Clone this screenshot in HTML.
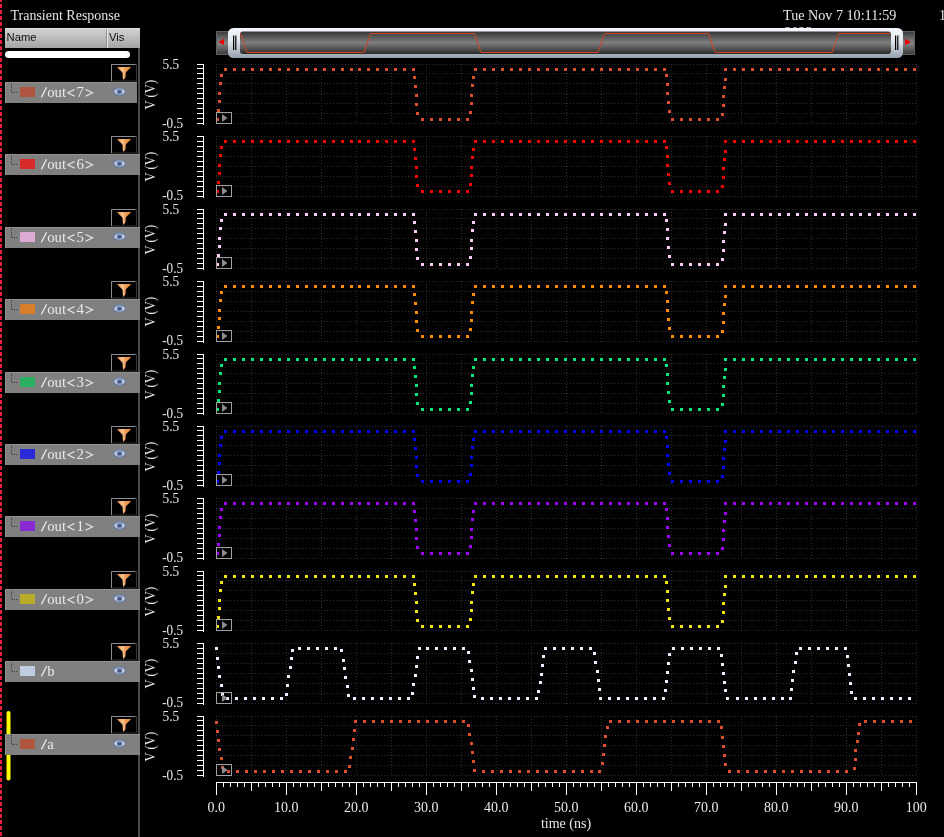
<!DOCTYPE html><html><head><meta charset="utf-8"><style>html,body{margin:0;padding:0;background:#000;width:944px;height:837px;overflow:hidden}svg{display:block;will-change:transform}</style></head><body>
<svg width="944" height="837" viewBox="0 0 944 837">
<defs>
<linearGradient id="hdr" x1="0" y1="0" x2="0" y2="1"><stop offset="0" stop-color="#d4d4d4"/><stop offset="1" stop-color="#a4a4a4"/></linearGradient>
<linearGradient id="pill" x1="0" y1="0" x2="0" y2="1"><stop offset="0" stop-color="#f4f8fc"/><stop offset="0.45" stop-color="#dfe5ec"/><stop offset="1" stop-color="#95a1ad"/></linearGradient>
<linearGradient id="dark" x1="0" y1="0" x2="0" y2="1"><stop offset="0" stop-color="#363636"/><stop offset="0.5" stop-color="#7e7e7e"/><stop offset="1" stop-color="#2a2a2a"/></linearGradient>
<linearGradient id="btn" x1="0" y1="0" x2="0" y2="1"><stop offset="0" stop-color="#3a3a3a"/><stop offset="0.5" stop-color="#858585"/><stop offset="1" stop-color="#383838"/></linearGradient>
<linearGradient id="fun" x1="0" y1="0" x2="1" y2="0"><stop offset="0" stop-color="#e8883a"/><stop offset="0.42" stop-color="#f8c890"/><stop offset="0.55" stop-color="#eea060"/><stop offset="1" stop-color="#f08420"/></linearGradient>
</defs>
<line x1="1" y1="0" x2="1" y2="837" stroke="#ec1c3c" stroke-width="2" stroke-dasharray="4 2" stroke-dashoffset="2"/>
<text x="10.5" y="20" font-family="Liberation Serif" font-size="14" fill="#e4e4e4" textLength="109.5" lengthAdjust="spacingAndGlyphs">Transient Response</text>
<rect x="5" y="28" width="135" height="20" fill="url(#hdr)"/>
<rect x="5" y="28" width="135" height="1" fill="#e0e0e0"/>
<rect x="106" y="29" width="1" height="19" fill="#909090"/><rect x="107" y="29" width="1" height="19" fill="#e8e8e8"/>
<text x="6.5" y="40.8" font-family="Liberation Sans" font-size="11.3" fill="#111">Name</text>
<text x="109" y="40.8" font-family="Liberation Sans" font-size="11.3" fill="#111">Vis</text>
<rect x="5" y="51" width="125" height="7" rx="3.5" fill="#ffffff"/>
<rect x="138" y="48" width="2" height="789" fill="#4a4a4a"/>
<rect x="6.5" y="711" width="4" height="69.5" rx="2" fill="#ffff00"/>
<rect x="111.5" y="64.5" width="25" height="16.5" fill="#000" stroke="#343434" stroke-width="1"/>
<path d="M111.5 81 V64.5 H135.5" fill="none" stroke="#8c8c8c" stroke-width="1"/>
<path d="M117 67 L131.2 67 C128.5 69.8 126.3 71.4 125.7 72.8 L125.5 77.2 L123.4 79.9 L122.8 77.5 L122.6 72.8 C121.6 71.4 119.5 69.8 117 67 Z" fill="url(#fun)"/>
<rect x="5" y="82" width="132" height="21" fill="#808080"/>
<rect x="5" y="82" width="132" height="1" fill="#929292"/>
<rect x="5" y="82" width="1" height="21" fill="#929292"/>
<rect x="11" y="83" width="1" height="1" fill="#3c3c3c"/>
<rect x="11" y="85" width="1" height="1" fill="#3c3c3c"/>
<rect x="11" y="87" width="1" height="1" fill="#3c3c3c"/>
<rect x="11" y="89" width="1" height="1" fill="#3c3c3c"/>
<rect x="11" y="91" width="1" height="1" fill="#3c3c3c"/>
<rect x="12" y="92" width="1" height="1" fill="#3c3c3c"/>
<rect x="14" y="92" width="1" height="1" fill="#3c3c3c"/>
<rect x="16" y="92" width="1" height="1" fill="#3c3c3c"/>
<rect x="20" y="87" width="15" height="10" fill="#b0553f"/>
<path d="M41.4 97.4 L46.6 87.3" stroke="#e6ece6" stroke-width="1.25" fill="none"/>
<text x="47.3 54.5 62" y="97" font-family="Liberation Serif" font-size="14.8" fill="#e6ece6">out</text>
<text x="76.6" y="97" font-family="Liberation Serif" font-size="14.8" fill="#e6ece6">7</text>
<path d="M74.6 89.4 L67.8 92.8 L74.6 96.2 M85.6 89.4 L92.6 92.8 L85.6 96.2" stroke="#e6ece6" stroke-width="1.1" fill="none"/>
<ellipse cx="119.5" cy="91.5" rx="6.5" ry="4.3" fill="#6a7ea8"/>
<ellipse cx="119.5" cy="91.5" rx="5" ry="3" fill="#d9dee6"/>
<ellipse cx="119.5" cy="91.5" rx="3" ry="2.9" fill="#7d8fb4"/>
<ellipse cx="119.5" cy="91.8" rx="2" ry="1.4" fill="#3f5585"/>
<rect x="111.5" y="136.5" width="25" height="16.5" fill="#000" stroke="#343434" stroke-width="1"/>
<path d="M111.5 153 V136.5 H135.5" fill="none" stroke="#8c8c8c" stroke-width="1"/>
<path d="M117 139 L131.2 139 C128.5 141.8 126.3 143.4 125.7 144.8 L125.5 149.2 L123.4 151.9 L122.8 149.5 L122.6 144.8 C121.6 143.4 119.5 141.8 117 139 Z" fill="url(#fun)"/>
<rect x="5" y="154" width="135" height="21" fill="#808080"/>
<rect x="5" y="154" width="135" height="1" fill="#929292"/>
<rect x="5" y="154" width="1" height="21" fill="#929292"/>
<rect x="11" y="155" width="1" height="1" fill="#3c3c3c"/>
<rect x="11" y="157" width="1" height="1" fill="#3c3c3c"/>
<rect x="11" y="159" width="1" height="1" fill="#3c3c3c"/>
<rect x="11" y="161" width="1" height="1" fill="#3c3c3c"/>
<rect x="11" y="163" width="1" height="1" fill="#3c3c3c"/>
<rect x="12" y="164" width="1" height="1" fill="#3c3c3c"/>
<rect x="14" y="164" width="1" height="1" fill="#3c3c3c"/>
<rect x="16" y="164" width="1" height="1" fill="#3c3c3c"/>
<rect x="20" y="159" width="15" height="10" fill="#d82a2a"/>
<path d="M41.4 169.4 L46.6 159.3" stroke="#e6ece6" stroke-width="1.25" fill="none"/>
<text x="47.3 54.5 62" y="169" font-family="Liberation Serif" font-size="14.8" fill="#e6ece6">out</text>
<text x="76.6" y="169" font-family="Liberation Serif" font-size="14.8" fill="#e6ece6">6</text>
<path d="M74.6 161.4 L67.8 164.8 L74.6 168.2 M85.6 161.4 L92.6 164.8 L85.6 168.2" stroke="#e6ece6" stroke-width="1.1" fill="none"/>
<ellipse cx="119.5" cy="163.5" rx="6.5" ry="4.3" fill="#6a7ea8"/>
<ellipse cx="119.5" cy="163.5" rx="5" ry="3" fill="#d9dee6"/>
<ellipse cx="119.5" cy="163.5" rx="3" ry="2.9" fill="#7d8fb4"/>
<ellipse cx="119.5" cy="163.8" rx="2" ry="1.4" fill="#3f5585"/>
<rect x="111.5" y="209.5" width="25" height="16.5" fill="#000" stroke="#343434" stroke-width="1"/>
<path d="M111.5 226 V209.5 H135.5" fill="none" stroke="#8c8c8c" stroke-width="1"/>
<path d="M117 212 L131.2 212 C128.5 214.8 126.3 216.4 125.7 217.8 L125.5 222.2 L123.4 224.9 L122.8 222.5 L122.6 217.8 C121.6 216.4 119.5 214.8 117 212 Z" fill="url(#fun)"/>
<rect x="5" y="227" width="135" height="21" fill="#808080"/>
<rect x="5" y="227" width="135" height="1" fill="#929292"/>
<rect x="5" y="227" width="1" height="21" fill="#929292"/>
<rect x="11" y="228" width="1" height="1" fill="#3c3c3c"/>
<rect x="11" y="230" width="1" height="1" fill="#3c3c3c"/>
<rect x="11" y="232" width="1" height="1" fill="#3c3c3c"/>
<rect x="11" y="234" width="1" height="1" fill="#3c3c3c"/>
<rect x="11" y="236" width="1" height="1" fill="#3c3c3c"/>
<rect x="12" y="237" width="1" height="1" fill="#3c3c3c"/>
<rect x="14" y="237" width="1" height="1" fill="#3c3c3c"/>
<rect x="16" y="237" width="1" height="1" fill="#3c3c3c"/>
<rect x="20" y="232" width="15" height="10" fill="#dcaad2"/>
<path d="M41.4 242.4 L46.6 232.3" stroke="#e6ece6" stroke-width="1.25" fill="none"/>
<text x="47.3 54.5 62" y="242" font-family="Liberation Serif" font-size="14.8" fill="#e6ece6">out</text>
<text x="76.6" y="242" font-family="Liberation Serif" font-size="14.8" fill="#e6ece6">5</text>
<path d="M74.6 234.4 L67.8 237.8 L74.6 241.2 M85.6 234.4 L92.6 237.8 L85.6 241.2" stroke="#e6ece6" stroke-width="1.1" fill="none"/>
<ellipse cx="119.5" cy="236.5" rx="6.5" ry="4.3" fill="#6a7ea8"/>
<ellipse cx="119.5" cy="236.5" rx="5" ry="3" fill="#d9dee6"/>
<ellipse cx="119.5" cy="236.5" rx="3" ry="2.9" fill="#7d8fb4"/>
<ellipse cx="119.5" cy="236.8" rx="2" ry="1.4" fill="#3f5585"/>
<rect x="111.5" y="281.5" width="25" height="16.5" fill="#000" stroke="#343434" stroke-width="1"/>
<path d="M111.5 298 V281.5 H135.5" fill="none" stroke="#8c8c8c" stroke-width="1"/>
<path d="M117 284 L131.2 284 C128.5 286.8 126.3 288.4 125.7 289.8 L125.5 294.2 L123.4 296.9 L122.8 294.5 L122.6 289.8 C121.6 288.4 119.5 286.8 117 284 Z" fill="url(#fun)"/>
<rect x="5" y="299" width="135" height="21" fill="#808080"/>
<rect x="5" y="299" width="135" height="1" fill="#929292"/>
<rect x="5" y="299" width="1" height="21" fill="#929292"/>
<rect x="11" y="300" width="1" height="1" fill="#3c3c3c"/>
<rect x="11" y="302" width="1" height="1" fill="#3c3c3c"/>
<rect x="11" y="304" width="1" height="1" fill="#3c3c3c"/>
<rect x="11" y="306" width="1" height="1" fill="#3c3c3c"/>
<rect x="11" y="308" width="1" height="1" fill="#3c3c3c"/>
<rect x="12" y="309" width="1" height="1" fill="#3c3c3c"/>
<rect x="14" y="309" width="1" height="1" fill="#3c3c3c"/>
<rect x="16" y="309" width="1" height="1" fill="#3c3c3c"/>
<rect x="20" y="304" width="15" height="10" fill="#d87e2a"/>
<path d="M41.4 314.4 L46.6 304.3" stroke="#e6ece6" stroke-width="1.25" fill="none"/>
<text x="47.3 54.5 62" y="314" font-family="Liberation Serif" font-size="14.8" fill="#e6ece6">out</text>
<text x="76.6" y="314" font-family="Liberation Serif" font-size="14.8" fill="#e6ece6">4</text>
<path d="M74.6 306.4 L67.8 309.8 L74.6 313.2 M85.6 306.4 L92.6 309.8 L85.6 313.2" stroke="#e6ece6" stroke-width="1.1" fill="none"/>
<ellipse cx="119.5" cy="308.5" rx="6.5" ry="4.3" fill="#6a7ea8"/>
<ellipse cx="119.5" cy="308.5" rx="5" ry="3" fill="#d9dee6"/>
<ellipse cx="119.5" cy="308.5" rx="3" ry="2.9" fill="#7d8fb4"/>
<ellipse cx="119.5" cy="308.8" rx="2" ry="1.4" fill="#3f5585"/>
<rect x="111.5" y="354.5" width="25" height="16.5" fill="#000" stroke="#343434" stroke-width="1"/>
<path d="M111.5 371 V354.5 H135.5" fill="none" stroke="#8c8c8c" stroke-width="1"/>
<path d="M117 357 L131.2 357 C128.5 359.8 126.3 361.4 125.7 362.8 L125.5 367.2 L123.4 369.9 L122.8 367.5 L122.6 362.8 C121.6 361.4 119.5 359.8 117 357 Z" fill="url(#fun)"/>
<rect x="5" y="372" width="135" height="21" fill="#808080"/>
<rect x="5" y="372" width="135" height="1" fill="#929292"/>
<rect x="5" y="372" width="1" height="21" fill="#929292"/>
<rect x="11" y="373" width="1" height="1" fill="#3c3c3c"/>
<rect x="11" y="375" width="1" height="1" fill="#3c3c3c"/>
<rect x="11" y="377" width="1" height="1" fill="#3c3c3c"/>
<rect x="11" y="379" width="1" height="1" fill="#3c3c3c"/>
<rect x="11" y="381" width="1" height="1" fill="#3c3c3c"/>
<rect x="12" y="382" width="1" height="1" fill="#3c3c3c"/>
<rect x="14" y="382" width="1" height="1" fill="#3c3c3c"/>
<rect x="16" y="382" width="1" height="1" fill="#3c3c3c"/>
<rect x="20" y="377" width="15" height="10" fill="#2aae60"/>
<path d="M41.4 387.4 L46.6 377.3" stroke="#e6ece6" stroke-width="1.25" fill="none"/>
<text x="47.3 54.5 62" y="387" font-family="Liberation Serif" font-size="14.8" fill="#e6ece6">out</text>
<text x="76.6" y="387" font-family="Liberation Serif" font-size="14.8" fill="#e6ece6">3</text>
<path d="M74.6 379.4 L67.8 382.8 L74.6 386.2 M85.6 379.4 L92.6 382.8 L85.6 386.2" stroke="#e6ece6" stroke-width="1.1" fill="none"/>
<ellipse cx="119.5" cy="381.5" rx="6.5" ry="4.3" fill="#6a7ea8"/>
<ellipse cx="119.5" cy="381.5" rx="5" ry="3" fill="#d9dee6"/>
<ellipse cx="119.5" cy="381.5" rx="3" ry="2.9" fill="#7d8fb4"/>
<ellipse cx="119.5" cy="381.8" rx="2" ry="1.4" fill="#3f5585"/>
<rect x="111.5" y="426.5" width="25" height="16.5" fill="#000" stroke="#343434" stroke-width="1"/>
<path d="M111.5 443 V426.5 H135.5" fill="none" stroke="#8c8c8c" stroke-width="1"/>
<path d="M117 429 L131.2 429 C128.5 431.8 126.3 433.4 125.7 434.8 L125.5 439.2 L123.4 441.9 L122.8 439.5 L122.6 434.8 C121.6 433.4 119.5 431.8 117 429 Z" fill="url(#fun)"/>
<rect x="5" y="444" width="135" height="21" fill="#808080"/>
<rect x="5" y="444" width="135" height="1" fill="#929292"/>
<rect x="5" y="444" width="1" height="21" fill="#929292"/>
<rect x="11" y="445" width="1" height="1" fill="#3c3c3c"/>
<rect x="11" y="447" width="1" height="1" fill="#3c3c3c"/>
<rect x="11" y="449" width="1" height="1" fill="#3c3c3c"/>
<rect x="11" y="451" width="1" height="1" fill="#3c3c3c"/>
<rect x="11" y="453" width="1" height="1" fill="#3c3c3c"/>
<rect x="12" y="454" width="1" height="1" fill="#3c3c3c"/>
<rect x="14" y="454" width="1" height="1" fill="#3c3c3c"/>
<rect x="16" y="454" width="1" height="1" fill="#3c3c3c"/>
<rect x="20" y="449" width="15" height="10" fill="#2a2ad8"/>
<path d="M41.4 459.4 L46.6 449.3" stroke="#e6ece6" stroke-width="1.25" fill="none"/>
<text x="47.3 54.5 62" y="459" font-family="Liberation Serif" font-size="14.8" fill="#e6ece6">out</text>
<text x="76.6" y="459" font-family="Liberation Serif" font-size="14.8" fill="#e6ece6">2</text>
<path d="M74.6 451.4 L67.8 454.8 L74.6 458.2 M85.6 451.4 L92.6 454.8 L85.6 458.2" stroke="#e6ece6" stroke-width="1.1" fill="none"/>
<ellipse cx="119.5" cy="453.5" rx="6.5" ry="4.3" fill="#6a7ea8"/>
<ellipse cx="119.5" cy="453.5" rx="5" ry="3" fill="#d9dee6"/>
<ellipse cx="119.5" cy="453.5" rx="3" ry="2.9" fill="#7d8fb4"/>
<ellipse cx="119.5" cy="453.8" rx="2" ry="1.4" fill="#3f5585"/>
<rect x="111.5" y="498.5" width="25" height="16.5" fill="#000" stroke="#343434" stroke-width="1"/>
<path d="M111.5 515 V498.5 H135.5" fill="none" stroke="#8c8c8c" stroke-width="1"/>
<path d="M117 501 L131.2 501 C128.5 503.8 126.3 505.4 125.7 506.8 L125.5 511.2 L123.4 513.9 L122.8 511.5 L122.6 506.8 C121.6 505.4 119.5 503.8 117 501 Z" fill="url(#fun)"/>
<rect x="5" y="516" width="135" height="21" fill="#808080"/>
<rect x="5" y="516" width="135" height="1" fill="#929292"/>
<rect x="5" y="516" width="1" height="21" fill="#929292"/>
<rect x="11" y="517" width="1" height="1" fill="#3c3c3c"/>
<rect x="11" y="519" width="1" height="1" fill="#3c3c3c"/>
<rect x="11" y="521" width="1" height="1" fill="#3c3c3c"/>
<rect x="11" y="523" width="1" height="1" fill="#3c3c3c"/>
<rect x="11" y="525" width="1" height="1" fill="#3c3c3c"/>
<rect x="12" y="526" width="1" height="1" fill="#3c3c3c"/>
<rect x="14" y="526" width="1" height="1" fill="#3c3c3c"/>
<rect x="16" y="526" width="1" height="1" fill="#3c3c3c"/>
<rect x="20" y="521" width="15" height="10" fill="#8a2ad2"/>
<path d="M41.4 531.4 L46.6 521.3" stroke="#e6ece6" stroke-width="1.25" fill="none"/>
<text x="47.3 54.5 62" y="531" font-family="Liberation Serif" font-size="14.8" fill="#e6ece6">out</text>
<text x="76.6" y="531" font-family="Liberation Serif" font-size="14.8" fill="#e6ece6">1</text>
<path d="M74.6 523.4 L67.8 526.8 L74.6 530.2 M85.6 523.4 L92.6 526.8 L85.6 530.2" stroke="#e6ece6" stroke-width="1.1" fill="none"/>
<ellipse cx="119.5" cy="525.5" rx="6.5" ry="4.3" fill="#6a7ea8"/>
<ellipse cx="119.5" cy="525.5" rx="5" ry="3" fill="#d9dee6"/>
<ellipse cx="119.5" cy="525.5" rx="3" ry="2.9" fill="#7d8fb4"/>
<ellipse cx="119.5" cy="525.8" rx="2" ry="1.4" fill="#3f5585"/>
<rect x="111.5" y="571.5" width="25" height="16.5" fill="#000" stroke="#343434" stroke-width="1"/>
<path d="M111.5 588 V571.5 H135.5" fill="none" stroke="#8c8c8c" stroke-width="1"/>
<path d="M117 574 L131.2 574 C128.5 576.8 126.3 578.4 125.7 579.8 L125.5 584.2 L123.4 586.9 L122.8 584.5 L122.6 579.8 C121.6 578.4 119.5 576.8 117 574 Z" fill="url(#fun)"/>
<rect x="5" y="589" width="135" height="21" fill="#808080"/>
<rect x="5" y="589" width="135" height="1" fill="#929292"/>
<rect x="5" y="589" width="1" height="21" fill="#929292"/>
<rect x="11" y="590" width="1" height="1" fill="#3c3c3c"/>
<rect x="11" y="592" width="1" height="1" fill="#3c3c3c"/>
<rect x="11" y="594" width="1" height="1" fill="#3c3c3c"/>
<rect x="11" y="596" width="1" height="1" fill="#3c3c3c"/>
<rect x="11" y="598" width="1" height="1" fill="#3c3c3c"/>
<rect x="12" y="599" width="1" height="1" fill="#3c3c3c"/>
<rect x="14" y="599" width="1" height="1" fill="#3c3c3c"/>
<rect x="16" y="599" width="1" height="1" fill="#3c3c3c"/>
<rect x="20" y="594" width="15" height="10" fill="#b8ac2a"/>
<path d="M41.4 604.4 L46.6 594.3" stroke="#e6ece6" stroke-width="1.25" fill="none"/>
<text x="47.3 54.5 62" y="604" font-family="Liberation Serif" font-size="14.8" fill="#e6ece6">out</text>
<text x="76.6" y="604" font-family="Liberation Serif" font-size="14.8" fill="#e6ece6">0</text>
<path d="M74.6 596.4 L67.8 599.8 L74.6 603.2 M85.6 596.4 L92.6 599.8 L85.6 603.2" stroke="#e6ece6" stroke-width="1.1" fill="none"/>
<ellipse cx="119.5" cy="598.5" rx="6.5" ry="4.3" fill="#6a7ea8"/>
<ellipse cx="119.5" cy="598.5" rx="5" ry="3" fill="#d9dee6"/>
<ellipse cx="119.5" cy="598.5" rx="3" ry="2.9" fill="#7d8fb4"/>
<ellipse cx="119.5" cy="598.8" rx="2" ry="1.4" fill="#3f5585"/>
<rect x="111.5" y="643.5" width="25" height="16.5" fill="#000" stroke="#343434" stroke-width="1"/>
<path d="M111.5 660 V643.5 H135.5" fill="none" stroke="#8c8c8c" stroke-width="1"/>
<path d="M117 646 L131.2 646 C128.5 648.8 126.3 650.4 125.7 651.8 L125.5 656.2 L123.4 658.9 L122.8 656.5 L122.6 651.8 C121.6 650.4 119.5 648.8 117 646 Z" fill="url(#fun)"/>
<rect x="5" y="661" width="135" height="21" fill="#808080"/>
<rect x="5" y="661" width="135" height="1" fill="#929292"/>
<rect x="5" y="661" width="1" height="21" fill="#929292"/>
<rect x="11" y="662" width="1" height="1" fill="#3c3c3c"/>
<rect x="11" y="664" width="1" height="1" fill="#3c3c3c"/>
<rect x="11" y="666" width="1" height="1" fill="#3c3c3c"/>
<rect x="11" y="668" width="1" height="1" fill="#3c3c3c"/>
<rect x="11" y="670" width="1" height="1" fill="#3c3c3c"/>
<rect x="12" y="671" width="1" height="1" fill="#3c3c3c"/>
<rect x="14" y="671" width="1" height="1" fill="#3c3c3c"/>
<rect x="16" y="671" width="1" height="1" fill="#3c3c3c"/>
<rect x="20" y="666" width="15" height="10" fill="#c0cce0"/>
<path d="M41.4 676.4 L46.6 666.3" stroke="#e6ece6" stroke-width="1.25" fill="none"/>
<text x="47.3" y="676" font-family="Liberation Serif" font-size="14.8" fill="#e6ece6">b</text>
<ellipse cx="119.5" cy="670.5" rx="6.5" ry="4.3" fill="#6a7ea8"/>
<ellipse cx="119.5" cy="670.5" rx="5" ry="3" fill="#d9dee6"/>
<ellipse cx="119.5" cy="670.5" rx="3" ry="2.9" fill="#7d8fb4"/>
<ellipse cx="119.5" cy="670.8" rx="2" ry="1.4" fill="#3f5585"/>
<rect x="111.5" y="716.5" width="25" height="16.5" fill="#000" stroke="#343434" stroke-width="1"/>
<path d="M111.5 733 V716.5 H135.5" fill="none" stroke="#8c8c8c" stroke-width="1"/>
<path d="M117 719 L131.2 719 C128.5 721.8 126.3 723.4 125.7 724.8 L125.5 729.2 L123.4 731.9 L122.8 729.5 L122.6 724.8 C121.6 723.4 119.5 721.8 117 719 Z" fill="url(#fun)"/>
<rect x="5" y="734" width="135" height="21" fill="#808080"/>
<rect x="5" y="734" width="135" height="1" fill="#929292"/>
<rect x="5" y="734" width="1" height="21" fill="#929292"/>
<rect x="11" y="735" width="1" height="1" fill="#3c3c3c"/>
<rect x="11" y="737" width="1" height="1" fill="#3c3c3c"/>
<rect x="11" y="739" width="1" height="1" fill="#3c3c3c"/>
<rect x="11" y="741" width="1" height="1" fill="#3c3c3c"/>
<rect x="11" y="743" width="1" height="1" fill="#3c3c3c"/>
<rect x="12" y="744" width="1" height="1" fill="#3c3c3c"/>
<rect x="14" y="744" width="1" height="1" fill="#3c3c3c"/>
<rect x="16" y="744" width="1" height="1" fill="#3c3c3c"/>
<rect x="20" y="739" width="15" height="10" fill="#b0553f"/>
<path d="M41.4 749.4 L46.6 739.3" stroke="#e6ece6" stroke-width="1.25" fill="none"/>
<text x="47.3" y="749" font-family="Liberation Serif" font-size="14.8" fill="#e6ece6">a</text>
<ellipse cx="119.5" cy="743.5" rx="6.5" ry="4.3" fill="#6a7ea8"/>
<ellipse cx="119.5" cy="743.5" rx="5" ry="3" fill="#d9dee6"/>
<ellipse cx="119.5" cy="743.5" rx="3" ry="2.9" fill="#7d8fb4"/>
<ellipse cx="119.5" cy="743.8" rx="2" ry="1.4" fill="#3f5585"/>
<text x="162.5" y="68.7" font-family="Liberation Serif" font-size="14" fill="#e8e8e8" textLength="16.7" lengthAdjust="spacingAndGlyphs">5.5</text>
<text x="162.2" y="127.7" font-family="Liberation Serif" font-size="14" fill="#e8e8e8" textLength="20.9" lengthAdjust="spacingAndGlyphs">-0.5</text>
<text x="0" y="0" transform="translate(155 94.7) rotate(-90)" text-anchor="middle" font-family="Liberation Serif" font-size="15" fill="#e8e8e8" textLength="29.7" lengthAdjust="spacingAndGlyphs">V (V)</text>
<path d="M203.5 64 V125 M197 64.5 H204 M197 68.5 H204 M197 73.5 H204 M197 78.5 H204 M197 83.5 H204 M197 88.5 H204 M197 93.5 H204 M197 98.5 H204 M197 103.5 H204 M197 108.5 H204 M197 113.5 H204 M197 118.5 H204 M197 123.5 H204" stroke="#ffffff" stroke-width="1" fill="none"/>
<text x="162.5" y="140.7" font-family="Liberation Serif" font-size="14" fill="#e8e8e8" textLength="16.7" lengthAdjust="spacingAndGlyphs">5.5</text>
<text x="162.2" y="199.7" font-family="Liberation Serif" font-size="14" fill="#e8e8e8" textLength="20.9" lengthAdjust="spacingAndGlyphs">-0.5</text>
<text x="0" y="0" transform="translate(155 166.7) rotate(-90)" text-anchor="middle" font-family="Liberation Serif" font-size="15" fill="#e8e8e8" textLength="29.7" lengthAdjust="spacingAndGlyphs">V (V)</text>
<path d="M203.5 136 V198 M197 136.5 H204 M197 141.5 H204 M197 146.5 H204 M197 151.5 H204 M197 156.5 H204 M197 161.5 H204 M197 166.5 H204 M197 171.5 H204 M197 176.5 H204 M197 181.5 H204 M197 186.5 H204 M197 191.5 H204 M197 196.5 H204" stroke="#ffffff" stroke-width="1" fill="none"/>
<text x="162.5" y="213.7" font-family="Liberation Serif" font-size="14" fill="#e8e8e8" textLength="16.7" lengthAdjust="spacingAndGlyphs">5.5</text>
<text x="162.2" y="272.7" font-family="Liberation Serif" font-size="14" fill="#e8e8e8" textLength="20.9" lengthAdjust="spacingAndGlyphs">-0.5</text>
<text x="0" y="0" transform="translate(155 239.7) rotate(-90)" text-anchor="middle" font-family="Liberation Serif" font-size="15" fill="#e8e8e8" textLength="29.7" lengthAdjust="spacingAndGlyphs">V (V)</text>
<path d="M203.5 209 V270 M197 209.5 H204 M197 213.5 H204 M197 218.5 H204 M197 223.5 H204 M197 228.5 H204 M197 233.5 H204 M197 238.5 H204 M197 243.5 H204 M197 248.5 H204 M197 253.5 H204 M197 258.5 H204 M197 263.5 H204 M197 268.5 H204" stroke="#ffffff" stroke-width="1" fill="none"/>
<text x="162.5" y="285.7" font-family="Liberation Serif" font-size="14" fill="#e8e8e8" textLength="16.7" lengthAdjust="spacingAndGlyphs">5.5</text>
<text x="162.2" y="344.7" font-family="Liberation Serif" font-size="14" fill="#e8e8e8" textLength="20.9" lengthAdjust="spacingAndGlyphs">-0.5</text>
<text x="0" y="0" transform="translate(155 311.7) rotate(-90)" text-anchor="middle" font-family="Liberation Serif" font-size="15" fill="#e8e8e8" textLength="29.7" lengthAdjust="spacingAndGlyphs">V (V)</text>
<path d="M203.5 281 V343 M197 281.5 H204 M197 286.5 H204 M197 291.5 H204 M197 296.5 H204 M197 301.5 H204 M197 306.5 H204 M197 311.5 H204 M197 316.5 H204 M197 321.5 H204 M197 326.5 H204 M197 331.5 H204 M197 336.5 H204 M197 341.5 H204" stroke="#ffffff" stroke-width="1" fill="none"/>
<text x="162.5" y="358.7" font-family="Liberation Serif" font-size="14" fill="#e8e8e8" textLength="16.7" lengthAdjust="spacingAndGlyphs">5.5</text>
<text x="162.2" y="417.7" font-family="Liberation Serif" font-size="14" fill="#e8e8e8" textLength="20.9" lengthAdjust="spacingAndGlyphs">-0.5</text>
<text x="0" y="0" transform="translate(155 384.7) rotate(-90)" text-anchor="middle" font-family="Liberation Serif" font-size="15" fill="#e8e8e8" textLength="29.7" lengthAdjust="spacingAndGlyphs">V (V)</text>
<path d="M203.5 354 V415 M197 354.5 H204 M197 358.5 H204 M197 363.5 H204 M197 368.5 H204 M197 373.5 H204 M197 378.5 H204 M197 383.5 H204 M197 388.5 H204 M197 393.5 H204 M197 398.5 H204 M197 403.5 H204 M197 408.5 H204 M197 413.5 H204" stroke="#ffffff" stroke-width="1" fill="none"/>
<text x="162.5" y="430.7" font-family="Liberation Serif" font-size="14" fill="#e8e8e8" textLength="16.7" lengthAdjust="spacingAndGlyphs">5.5</text>
<text x="162.2" y="489.7" font-family="Liberation Serif" font-size="14" fill="#e8e8e8" textLength="20.9" lengthAdjust="spacingAndGlyphs">-0.5</text>
<text x="0" y="0" transform="translate(155 456.7) rotate(-90)" text-anchor="middle" font-family="Liberation Serif" font-size="15" fill="#e8e8e8" textLength="29.7" lengthAdjust="spacingAndGlyphs">V (V)</text>
<path d="M203.5 426 V487 M197 426.5 H204 M197 430.5 H204 M197 435.5 H204 M197 440.5 H204 M197 445.5 H204 M197 450.5 H204 M197 455.5 H204 M197 460.5 H204 M197 465.5 H204 M197 470.5 H204 M197 475.5 H204 M197 480.5 H204 M197 485.5 H204" stroke="#ffffff" stroke-width="1" fill="none"/>
<text x="162.5" y="502.7" font-family="Liberation Serif" font-size="14" fill="#e8e8e8" textLength="16.7" lengthAdjust="spacingAndGlyphs">5.5</text>
<text x="162.2" y="561.7" font-family="Liberation Serif" font-size="14" fill="#e8e8e8" textLength="20.9" lengthAdjust="spacingAndGlyphs">-0.5</text>
<text x="0" y="0" transform="translate(155 528.7) rotate(-90)" text-anchor="middle" font-family="Liberation Serif" font-size="15" fill="#e8e8e8" textLength="29.7" lengthAdjust="spacingAndGlyphs">V (V)</text>
<path d="M203.5 498 V560 M197 498.5 H204 M197 503.5 H204 M197 508.5 H204 M197 513.5 H204 M197 518.5 H204 M197 523.5 H204 M197 528.5 H204 M197 533.5 H204 M197 538.5 H204 M197 543.5 H204 M197 548.5 H204 M197 553.5 H204 M197 558.5 H204" stroke="#ffffff" stroke-width="1" fill="none"/>
<text x="162.5" y="575.7" font-family="Liberation Serif" font-size="14" fill="#e8e8e8" textLength="16.7" lengthAdjust="spacingAndGlyphs">5.5</text>
<text x="162.2" y="634.7" font-family="Liberation Serif" font-size="14" fill="#e8e8e8" textLength="20.9" lengthAdjust="spacingAndGlyphs">-0.5</text>
<text x="0" y="0" transform="translate(155 601.7) rotate(-90)" text-anchor="middle" font-family="Liberation Serif" font-size="15" fill="#e8e8e8" textLength="29.7" lengthAdjust="spacingAndGlyphs">V (V)</text>
<path d="M203.5 571 V632 M197 571.5 H204 M197 575.5 H204 M197 580.5 H204 M197 585.5 H204 M197 590.5 H204 M197 595.5 H204 M197 600.5 H204 M197 605.5 H204 M197 610.5 H204 M197 615.5 H204 M197 620.5 H204 M197 625.5 H204 M197 630.5 H204" stroke="#ffffff" stroke-width="1" fill="none"/>
<text x="162.5" y="647.7" font-family="Liberation Serif" font-size="14" fill="#e8e8e8" textLength="16.7" lengthAdjust="spacingAndGlyphs">5.5</text>
<text x="162.2" y="706.7" font-family="Liberation Serif" font-size="14" fill="#e8e8e8" textLength="20.9" lengthAdjust="spacingAndGlyphs">-0.5</text>
<text x="0" y="0" transform="translate(155 673.7) rotate(-90)" text-anchor="middle" font-family="Liberation Serif" font-size="15" fill="#e8e8e8" textLength="29.7" lengthAdjust="spacingAndGlyphs">V (V)</text>
<path d="M203.5 643 V705 M197 643.5 H204 M197 648.5 H204 M197 653.5 H204 M197 658.5 H204 M197 663.5 H204 M197 668.5 H204 M197 673.5 H204 M197 678.5 H204 M197 683.5 H204 M197 688.5 H204 M197 693.5 H204 M197 698.5 H204 M197 703.5 H204" stroke="#ffffff" stroke-width="1" fill="none"/>
<text x="162.5" y="720.7" font-family="Liberation Serif" font-size="14" fill="#e8e8e8" textLength="16.7" lengthAdjust="spacingAndGlyphs">5.5</text>
<text x="162.2" y="779.7" font-family="Liberation Serif" font-size="14" fill="#e8e8e8" textLength="20.9" lengthAdjust="spacingAndGlyphs">-0.5</text>
<text x="0" y="0" transform="translate(155 746.7) rotate(-90)" text-anchor="middle" font-family="Liberation Serif" font-size="15" fill="#e8e8e8" textLength="29.7" lengthAdjust="spacingAndGlyphs">V (V)</text>
<path d="M203.5 716 V777 M197 716.5 H204 M197 720.5 H204 M197 725.5 H204 M197 730.5 H204 M197 735.5 H204 M197 740.5 H204 M197 745.5 H204 M197 750.5 H204 M197 755.5 H204 M197 760.5 H204 M197 765.5 H204 M197 770.5 H204 M197 775.5 H204" stroke="#ffffff" stroke-width="1" fill="none"/>
<path d="M216 64.5 H917 M216 73.5 H917 M216 83.5 H917 M216 93.5 H917 M216 103.5 H917 M216 113.5 H917 M216 123.5 H917 " stroke="#2c2c2c" stroke-width="1" stroke-dasharray="1 2" fill="none"/>
<path d="M216.5 64 V124 M251.5 64 V124 M286.5 64 V124 M321.5 64 V124 M356.5 64 V124 M391.5 64 V124 M426.5 64 V124 M461.5 64 V124 M496.5 64 V124 M531.5 64 V124 M566.5 64 V124 M601.5 64 V124 M636.5 64 V124 M671.5 64 V124 M706.5 64 V124 M741.5 64 V124 M776.5 64 V124 M811.5 64 V124 M846.5 64 V124 M881.5 64 V124 M916.5 64 V124 " stroke="#2c2c2c" stroke-width="1" stroke-dasharray="1 2" fill="none"/>
<path d="M216 136.5 H917 M216 146.5 H917 M216 156.5 H917 M216 166.5 H917 M216 176.5 H917 M216 186.5 H917 M216 196.5 H917 " stroke="#2c2c2c" stroke-width="1" stroke-dasharray="1 2" fill="none"/>
<path d="M216.5 136 V197 M251.5 136 V197 M286.5 136 V197 M321.5 136 V197 M356.5 136 V197 M391.5 136 V197 M426.5 136 V197 M461.5 136 V197 M496.5 136 V197 M531.5 136 V197 M566.5 136 V197 M601.5 136 V197 M636.5 136 V197 M671.5 136 V197 M706.5 136 V197 M741.5 136 V197 M776.5 136 V197 M811.5 136 V197 M846.5 136 V197 M881.5 136 V197 M916.5 136 V197 " stroke="#2c2c2c" stroke-width="1" stroke-dasharray="1 2" fill="none"/>
<path d="M216 209.5 H917 M216 218.5 H917 M216 228.5 H917 M216 238.5 H917 M216 248.5 H917 M216 258.5 H917 M216 268.5 H917 " stroke="#2c2c2c" stroke-width="1" stroke-dasharray="1 2" fill="none"/>
<path d="M216.5 209 V269 M251.5 209 V269 M286.5 209 V269 M321.5 209 V269 M356.5 209 V269 M391.5 209 V269 M426.5 209 V269 M461.5 209 V269 M496.5 209 V269 M531.5 209 V269 M566.5 209 V269 M601.5 209 V269 M636.5 209 V269 M671.5 209 V269 M706.5 209 V269 M741.5 209 V269 M776.5 209 V269 M811.5 209 V269 M846.5 209 V269 M881.5 209 V269 M916.5 209 V269 " stroke="#2c2c2c" stroke-width="1" stroke-dasharray="1 2" fill="none"/>
<path d="M216 281.5 H917 M216 291.5 H917 M216 301.5 H917 M216 311.5 H917 M216 321.5 H917 M216 331.5 H917 M216 341.5 H917 " stroke="#2c2c2c" stroke-width="1" stroke-dasharray="1 2" fill="none"/>
<path d="M216.5 281 V342 M251.5 281 V342 M286.5 281 V342 M321.5 281 V342 M356.5 281 V342 M391.5 281 V342 M426.5 281 V342 M461.5 281 V342 M496.5 281 V342 M531.5 281 V342 M566.5 281 V342 M601.5 281 V342 M636.5 281 V342 M671.5 281 V342 M706.5 281 V342 M741.5 281 V342 M776.5 281 V342 M811.5 281 V342 M846.5 281 V342 M881.5 281 V342 M916.5 281 V342 " stroke="#2c2c2c" stroke-width="1" stroke-dasharray="1 2" fill="none"/>
<path d="M216 354.5 H917 M216 363.5 H917 M216 373.5 H917 M216 383.5 H917 M216 393.5 H917 M216 403.5 H917 M216 413.5 H917 " stroke="#2c2c2c" stroke-width="1" stroke-dasharray="1 2" fill="none"/>
<path d="M216.5 354 V414 M251.5 354 V414 M286.5 354 V414 M321.5 354 V414 M356.5 354 V414 M391.5 354 V414 M426.5 354 V414 M461.5 354 V414 M496.5 354 V414 M531.5 354 V414 M566.5 354 V414 M601.5 354 V414 M636.5 354 V414 M671.5 354 V414 M706.5 354 V414 M741.5 354 V414 M776.5 354 V414 M811.5 354 V414 M846.5 354 V414 M881.5 354 V414 M916.5 354 V414 " stroke="#2c2c2c" stroke-width="1" stroke-dasharray="1 2" fill="none"/>
<path d="M216 426.5 H917 M216 435.5 H917 M216 445.5 H917 M216 455.5 H917 M216 465.5 H917 M216 475.5 H917 M216 485.5 H917 " stroke="#2c2c2c" stroke-width="1" stroke-dasharray="1 2" fill="none"/>
<path d="M216.5 426 V486 M251.5 426 V486 M286.5 426 V486 M321.5 426 V486 M356.5 426 V486 M391.5 426 V486 M426.5 426 V486 M461.5 426 V486 M496.5 426 V486 M531.5 426 V486 M566.5 426 V486 M601.5 426 V486 M636.5 426 V486 M671.5 426 V486 M706.5 426 V486 M741.5 426 V486 M776.5 426 V486 M811.5 426 V486 M846.5 426 V486 M881.5 426 V486 M916.5 426 V486 " stroke="#2c2c2c" stroke-width="1" stroke-dasharray="1 2" fill="none"/>
<path d="M216 498.5 H917 M216 508.5 H917 M216 518.5 H917 M216 528.5 H917 M216 538.5 H917 M216 548.5 H917 M216 558.5 H917 " stroke="#2c2c2c" stroke-width="1" stroke-dasharray="1 2" fill="none"/>
<path d="M216.5 498 V559 M251.5 498 V559 M286.5 498 V559 M321.5 498 V559 M356.5 498 V559 M391.5 498 V559 M426.5 498 V559 M461.5 498 V559 M496.5 498 V559 M531.5 498 V559 M566.5 498 V559 M601.5 498 V559 M636.5 498 V559 M671.5 498 V559 M706.5 498 V559 M741.5 498 V559 M776.5 498 V559 M811.5 498 V559 M846.5 498 V559 M881.5 498 V559 M916.5 498 V559 " stroke="#2c2c2c" stroke-width="1" stroke-dasharray="1 2" fill="none"/>
<path d="M216 571.5 H917 M216 580.5 H917 M216 590.5 H917 M216 600.5 H917 M216 610.5 H917 M216 620.5 H917 M216 630.5 H917 " stroke="#2c2c2c" stroke-width="1" stroke-dasharray="1 2" fill="none"/>
<path d="M216.5 571 V631 M251.5 571 V631 M286.5 571 V631 M321.5 571 V631 M356.5 571 V631 M391.5 571 V631 M426.5 571 V631 M461.5 571 V631 M496.5 571 V631 M531.5 571 V631 M566.5 571 V631 M601.5 571 V631 M636.5 571 V631 M671.5 571 V631 M706.5 571 V631 M741.5 571 V631 M776.5 571 V631 M811.5 571 V631 M846.5 571 V631 M881.5 571 V631 M916.5 571 V631 " stroke="#2c2c2c" stroke-width="1" stroke-dasharray="1 2" fill="none"/>
<path d="M216 643.5 H917 M216 653.5 H917 M216 663.5 H917 M216 673.5 H917 M216 683.5 H917 M216 693.5 H917 M216 703.5 H917 " stroke="#2c2c2c" stroke-width="1" stroke-dasharray="1 2" fill="none"/>
<path d="M216.5 643 V704 M251.5 643 V704 M286.5 643 V704 M321.5 643 V704 M356.5 643 V704 M391.5 643 V704 M426.5 643 V704 M461.5 643 V704 M496.5 643 V704 M531.5 643 V704 M566.5 643 V704 M601.5 643 V704 M636.5 643 V704 M671.5 643 V704 M706.5 643 V704 M741.5 643 V704 M776.5 643 V704 M811.5 643 V704 M846.5 643 V704 M881.5 643 V704 M916.5 643 V704 " stroke="#2c2c2c" stroke-width="1" stroke-dasharray="1 2" fill="none"/>
<path d="M216 716.5 H917 M216 725.5 H917 M216 735.5 H917 M216 745.5 H917 M216 755.5 H917 M216 765.5 H917 M216 775.5 H917 " stroke="#2c2c2c" stroke-width="1" stroke-dasharray="1 2" fill="none"/>
<path d="M216.5 716 V776 M251.5 716 V776 M286.5 716 V776 M321.5 716 V776 M356.5 716 V776 M391.5 716 V776 M426.5 716 V776 M461.5 716 V776 M496.5 716 V776 M531.5 716 V776 M566.5 716 V776 M601.5 716 V776 M636.5 716 V776 M671.5 716 V776 M706.5 716 V776 M741.5 716 V776 M776.5 716 V776 M811.5 716 V776 M846.5 716 V776 M881.5 716 V776 M916.5 716 V776 " stroke="#2c2c2c" stroke-width="1" stroke-dasharray="1 2" fill="none"/>
<path d="M216 118h3v3h-3zM217 109h3v3h-3zM218 100h3v3h-3zM218 92h3v3h-3zM219 82h3v3h-3zM220 74h3v3h-3zM224 68h3v3h-3zM233 68h3v3h-3zM242 68h3v3h-3zM251 68h3v3h-3zM260 68h3v3h-3zM269 68h3v3h-3zM278 68h3v3h-3zM287 68h3v3h-3zM296 68h3v3h-3zM305 68h3v3h-3zM314 68h3v3h-3zM323 68h3v3h-3zM332 68h3v3h-3zM341 68h3v3h-3zM350 68h3v3h-3zM358 68h3v3h-3zM367 68h3v3h-3zM376 68h3v3h-3zM385 68h3v3h-3zM394 68h3v3h-3zM403 68h3v3h-3zM412 68h3v3h-3zM413 76h3v3h-3zM414 85h3v3h-3zM415 94h3v3h-3zM415 103h3v3h-3zM416 112h3v3h-3zM421 118h3v3h-3zM430 118h3v3h-3zM439 118h3v3h-3zM448 118h3v3h-3zM457 118h3v3h-3zM466 118h3v3h-3zM469 111h3v3h-3zM470 102h3v3h-3zM470 94h3v3h-3zM471 84h3v3h-3zM472 76h3v3h-3zM474 68h3v3h-3zM483 68h3v3h-3zM492 68h3v3h-3zM501 68h3v3h-3zM510 68h3v3h-3zM519 68h3v3h-3zM528 68h3v3h-3zM537 68h3v3h-3zM546 68h3v3h-3zM555 68h3v3h-3zM564 68h3v3h-3zM573 68h3v3h-3zM582 68h3v3h-3zM591 68h3v3h-3zM600 68h3v3h-3zM609 68h3v3h-3zM618 68h3v3h-3zM627 68h3v3h-3zM636 68h3v3h-3zM645 68h3v3h-3zM654 68h3v3h-3zM663 68h3v3h-3zM665 74h3v3h-3zM666 83h3v3h-3zM666 92h3v3h-3zM667 101h3v3h-3zM668 110h3v3h-3zM671 118h3v3h-3zM680 118h3v3h-3zM689 118h3v3h-3zM698 118h3v3h-3zM707 118h3v3h-3zM716 118h3v3h-3zM721 113h3v3h-3zM722 104h3v3h-3zM722 95h3v3h-3zM723 86h3v3h-3zM724 78h3v3h-3zM724 68h3v3h-3zM733 68h3v3h-3zM742 68h3v3h-3zM751 68h3v3h-3zM760 68h3v3h-3zM769 68h3v3h-3zM778 68h3v3h-3zM787 68h3v3h-3zM796 68h3v3h-3zM805 68h3v3h-3zM814 68h3v3h-3zM823 68h3v3h-3zM832 68h3v3h-3zM841 68h3v3h-3zM850 68h3v3h-3zM859 68h3v3h-3zM868 68h3v3h-3zM877 68h3v3h-3zM886 68h3v3h-3zM895 68h3v3h-3zM904 68h3v3h-3zM913 68h3v3h-3z" fill="#dc4c2e"/>
<path d="M216 190h3v3h-3zM217 181h3v3h-3zM218 172h3v3h-3zM218 164h3v3h-3zM219 154h3v3h-3zM220 146h3v3h-3zM224 140h3v3h-3zM233 140h3v3h-3zM242 140h3v3h-3zM251 140h3v3h-3zM260 140h3v3h-3zM269 140h3v3h-3zM278 140h3v3h-3zM287 140h3v3h-3zM296 140h3v3h-3zM305 140h3v3h-3zM314 140h3v3h-3zM323 140h3v3h-3zM332 140h3v3h-3zM341 140h3v3h-3zM350 140h3v3h-3zM358 140h3v3h-3zM367 140h3v3h-3zM376 140h3v3h-3zM385 140h3v3h-3zM394 140h3v3h-3zM403 140h3v3h-3zM412 140h3v3h-3zM413 148h3v3h-3zM414 157h3v3h-3zM415 166h3v3h-3zM415 175h3v3h-3zM416 184h3v3h-3zM421 190h3v3h-3zM430 190h3v3h-3zM439 190h3v3h-3zM448 190h3v3h-3zM457 190h3v3h-3zM466 190h3v3h-3zM469 183h3v3h-3zM470 174h3v3h-3zM470 166h3v3h-3zM471 156h3v3h-3zM472 148h3v3h-3zM474 140h3v3h-3zM483 140h3v3h-3zM492 140h3v3h-3zM501 140h3v3h-3zM510 140h3v3h-3zM519 140h3v3h-3zM528 140h3v3h-3zM537 140h3v3h-3zM546 140h3v3h-3zM555 140h3v3h-3zM564 140h3v3h-3zM573 140h3v3h-3zM582 140h3v3h-3zM591 140h3v3h-3zM600 140h3v3h-3zM609 140h3v3h-3zM618 140h3v3h-3zM627 140h3v3h-3zM636 140h3v3h-3zM645 140h3v3h-3zM654 140h3v3h-3zM663 140h3v3h-3zM665 146h3v3h-3zM666 155h3v3h-3zM666 164h3v3h-3zM667 173h3v3h-3zM668 182h3v3h-3zM671 190h3v3h-3zM680 190h3v3h-3zM689 190h3v3h-3zM698 190h3v3h-3zM707 190h3v3h-3zM716 190h3v3h-3zM721 185h3v3h-3zM722 176h3v3h-3zM722 167h3v3h-3zM723 158h3v3h-3zM724 150h3v3h-3zM724 140h3v3h-3zM733 140h3v3h-3zM742 140h3v3h-3zM751 140h3v3h-3zM760 140h3v3h-3zM769 140h3v3h-3zM778 140h3v3h-3zM787 140h3v3h-3zM796 140h3v3h-3zM805 140h3v3h-3zM814 140h3v3h-3zM823 140h3v3h-3zM832 140h3v3h-3zM841 140h3v3h-3zM850 140h3v3h-3zM859 140h3v3h-3zM868 140h3v3h-3zM877 140h3v3h-3zM886 140h3v3h-3zM895 140h3v3h-3zM904 140h3v3h-3zM913 140h3v3h-3z" fill="#ff0000"/>
<path d="M216 263h3v3h-3zM217 254h3v3h-3zM218 245h3v3h-3zM218 237h3v3h-3zM219 227h3v3h-3zM220 219h3v3h-3zM224 213h3v3h-3zM233 213h3v3h-3zM242 213h3v3h-3zM251 213h3v3h-3zM260 213h3v3h-3zM269 213h3v3h-3zM278 213h3v3h-3zM287 213h3v3h-3zM296 213h3v3h-3zM305 213h3v3h-3zM314 213h3v3h-3zM323 213h3v3h-3zM332 213h3v3h-3zM341 213h3v3h-3zM350 213h3v3h-3zM358 213h3v3h-3zM367 213h3v3h-3zM376 213h3v3h-3zM385 213h3v3h-3zM394 213h3v3h-3zM403 213h3v3h-3zM412 213h3v3h-3zM413 221h3v3h-3zM414 230h3v3h-3zM415 239h3v3h-3zM415 248h3v3h-3zM416 257h3v3h-3zM421 263h3v3h-3zM430 263h3v3h-3zM439 263h3v3h-3zM448 263h3v3h-3zM457 263h3v3h-3zM466 263h3v3h-3zM469 256h3v3h-3zM470 247h3v3h-3zM470 239h3v3h-3zM471 229h3v3h-3zM472 221h3v3h-3zM474 213h3v3h-3zM483 213h3v3h-3zM492 213h3v3h-3zM501 213h3v3h-3zM510 213h3v3h-3zM519 213h3v3h-3zM528 213h3v3h-3zM537 213h3v3h-3zM546 213h3v3h-3zM555 213h3v3h-3zM564 213h3v3h-3zM573 213h3v3h-3zM582 213h3v3h-3zM591 213h3v3h-3zM600 213h3v3h-3zM609 213h3v3h-3zM618 213h3v3h-3zM627 213h3v3h-3zM636 213h3v3h-3zM645 213h3v3h-3zM654 213h3v3h-3zM663 213h3v3h-3zM665 219h3v3h-3zM666 228h3v3h-3zM666 237h3v3h-3zM667 246h3v3h-3zM668 255h3v3h-3zM671 263h3v3h-3zM680 263h3v3h-3zM689 263h3v3h-3zM698 263h3v3h-3zM707 263h3v3h-3zM716 263h3v3h-3zM721 258h3v3h-3zM722 249h3v3h-3zM722 240h3v3h-3zM723 231h3v3h-3zM724 223h3v3h-3zM724 213h3v3h-3zM733 213h3v3h-3zM742 213h3v3h-3zM751 213h3v3h-3zM760 213h3v3h-3zM769 213h3v3h-3zM778 213h3v3h-3zM787 213h3v3h-3zM796 213h3v3h-3zM805 213h3v3h-3zM814 213h3v3h-3zM823 213h3v3h-3zM832 213h3v3h-3zM841 213h3v3h-3zM850 213h3v3h-3zM859 213h3v3h-3zM868 213h3v3h-3zM877 213h3v3h-3zM886 213h3v3h-3zM895 213h3v3h-3zM904 213h3v3h-3zM913 213h3v3h-3z" fill="#ffccf8"/>
<path d="M216 335h3v3h-3zM217 326h3v3h-3zM218 317h3v3h-3zM218 309h3v3h-3zM219 299h3v3h-3zM220 291h3v3h-3zM224 285h3v3h-3zM233 285h3v3h-3zM242 285h3v3h-3zM251 285h3v3h-3zM260 285h3v3h-3zM269 285h3v3h-3zM278 285h3v3h-3zM287 285h3v3h-3zM296 285h3v3h-3zM305 285h3v3h-3zM314 285h3v3h-3zM323 285h3v3h-3zM332 285h3v3h-3zM341 285h3v3h-3zM350 285h3v3h-3zM358 285h3v3h-3zM367 285h3v3h-3zM376 285h3v3h-3zM385 285h3v3h-3zM394 285h3v3h-3zM403 285h3v3h-3zM412 285h3v3h-3zM413 293h3v3h-3zM414 302h3v3h-3zM415 311h3v3h-3zM415 320h3v3h-3zM416 329h3v3h-3zM421 335h3v3h-3zM430 335h3v3h-3zM439 335h3v3h-3zM448 335h3v3h-3zM457 335h3v3h-3zM466 335h3v3h-3zM469 328h3v3h-3zM470 319h3v3h-3zM470 311h3v3h-3zM471 301h3v3h-3zM472 293h3v3h-3zM474 285h3v3h-3zM483 285h3v3h-3zM492 285h3v3h-3zM501 285h3v3h-3zM510 285h3v3h-3zM519 285h3v3h-3zM528 285h3v3h-3zM537 285h3v3h-3zM546 285h3v3h-3zM555 285h3v3h-3zM564 285h3v3h-3zM573 285h3v3h-3zM582 285h3v3h-3zM591 285h3v3h-3zM600 285h3v3h-3zM609 285h3v3h-3zM618 285h3v3h-3zM627 285h3v3h-3zM636 285h3v3h-3zM645 285h3v3h-3zM654 285h3v3h-3zM663 285h3v3h-3zM665 291h3v3h-3zM666 300h3v3h-3zM666 309h3v3h-3zM667 318h3v3h-3zM668 327h3v3h-3zM671 335h3v3h-3zM680 335h3v3h-3zM689 335h3v3h-3zM698 335h3v3h-3zM707 335h3v3h-3zM716 335h3v3h-3zM721 330h3v3h-3zM722 321h3v3h-3zM722 312h3v3h-3zM723 303h3v3h-3zM724 295h3v3h-3zM724 285h3v3h-3zM733 285h3v3h-3zM742 285h3v3h-3zM751 285h3v3h-3zM760 285h3v3h-3zM769 285h3v3h-3zM778 285h3v3h-3zM787 285h3v3h-3zM796 285h3v3h-3zM805 285h3v3h-3zM814 285h3v3h-3zM823 285h3v3h-3zM832 285h3v3h-3zM841 285h3v3h-3zM850 285h3v3h-3zM859 285h3v3h-3zM868 285h3v3h-3zM877 285h3v3h-3zM886 285h3v3h-3zM895 285h3v3h-3zM904 285h3v3h-3zM913 285h3v3h-3z" fill="#ff8c00"/>
<path d="M216 408h3v3h-3zM217 399h3v3h-3zM218 390h3v3h-3zM218 382h3v3h-3zM219 372h3v3h-3zM220 364h3v3h-3zM224 358h3v3h-3zM233 358h3v3h-3zM242 358h3v3h-3zM251 358h3v3h-3zM260 358h3v3h-3zM269 358h3v3h-3zM278 358h3v3h-3zM287 358h3v3h-3zM296 358h3v3h-3zM305 358h3v3h-3zM314 358h3v3h-3zM323 358h3v3h-3zM332 358h3v3h-3zM341 358h3v3h-3zM350 358h3v3h-3zM358 358h3v3h-3zM367 358h3v3h-3zM376 358h3v3h-3zM385 358h3v3h-3zM394 358h3v3h-3zM403 358h3v3h-3zM412 358h3v3h-3zM413 366h3v3h-3zM414 375h3v3h-3zM415 384h3v3h-3zM415 393h3v3h-3zM416 402h3v3h-3zM421 408h3v3h-3zM430 408h3v3h-3zM439 408h3v3h-3zM448 408h3v3h-3zM457 408h3v3h-3zM466 408h3v3h-3zM469 401h3v3h-3zM470 392h3v3h-3zM470 384h3v3h-3zM471 374h3v3h-3zM472 366h3v3h-3zM474 358h3v3h-3zM483 358h3v3h-3zM492 358h3v3h-3zM501 358h3v3h-3zM510 358h3v3h-3zM519 358h3v3h-3zM528 358h3v3h-3zM537 358h3v3h-3zM546 358h3v3h-3zM555 358h3v3h-3zM564 358h3v3h-3zM573 358h3v3h-3zM582 358h3v3h-3zM591 358h3v3h-3zM600 358h3v3h-3zM609 358h3v3h-3zM618 358h3v3h-3zM627 358h3v3h-3zM636 358h3v3h-3zM645 358h3v3h-3zM654 358h3v3h-3zM663 358h3v3h-3zM665 364h3v3h-3zM666 373h3v3h-3zM666 382h3v3h-3zM667 391h3v3h-3zM668 400h3v3h-3zM671 408h3v3h-3zM680 408h3v3h-3zM689 408h3v3h-3zM698 408h3v3h-3zM707 408h3v3h-3zM716 408h3v3h-3zM721 403h3v3h-3zM722 394h3v3h-3zM722 385h3v3h-3zM723 376h3v3h-3zM724 368h3v3h-3zM724 358h3v3h-3zM733 358h3v3h-3zM742 358h3v3h-3zM751 358h3v3h-3zM760 358h3v3h-3zM769 358h3v3h-3zM778 358h3v3h-3zM787 358h3v3h-3zM796 358h3v3h-3zM805 358h3v3h-3zM814 358h3v3h-3zM823 358h3v3h-3zM832 358h3v3h-3zM841 358h3v3h-3zM850 358h3v3h-3zM859 358h3v3h-3zM868 358h3v3h-3zM877 358h3v3h-3zM886 358h3v3h-3zM895 358h3v3h-3zM904 358h3v3h-3zM913 358h3v3h-3z" fill="#00e878"/>
<path d="M216 480h3v3h-3zM217 471h3v3h-3zM218 462h3v3h-3zM218 454h3v3h-3zM219 444h3v3h-3zM220 436h3v3h-3zM224 430h3v3h-3zM233 430h3v3h-3zM242 430h3v3h-3zM251 430h3v3h-3zM260 430h3v3h-3zM269 430h3v3h-3zM278 430h3v3h-3zM287 430h3v3h-3zM296 430h3v3h-3zM305 430h3v3h-3zM314 430h3v3h-3zM323 430h3v3h-3zM332 430h3v3h-3zM341 430h3v3h-3zM350 430h3v3h-3zM358 430h3v3h-3zM367 430h3v3h-3zM376 430h3v3h-3zM385 430h3v3h-3zM394 430h3v3h-3zM403 430h3v3h-3zM412 430h3v3h-3zM413 438h3v3h-3zM414 447h3v3h-3zM415 456h3v3h-3zM415 465h3v3h-3zM416 474h3v3h-3zM421 480h3v3h-3zM430 480h3v3h-3zM439 480h3v3h-3zM448 480h3v3h-3zM457 480h3v3h-3zM466 480h3v3h-3zM469 473h3v3h-3zM470 464h3v3h-3zM470 456h3v3h-3zM471 446h3v3h-3zM472 438h3v3h-3zM474 430h3v3h-3zM483 430h3v3h-3zM492 430h3v3h-3zM501 430h3v3h-3zM510 430h3v3h-3zM519 430h3v3h-3zM528 430h3v3h-3zM537 430h3v3h-3zM546 430h3v3h-3zM555 430h3v3h-3zM564 430h3v3h-3zM573 430h3v3h-3zM582 430h3v3h-3zM591 430h3v3h-3zM600 430h3v3h-3zM609 430h3v3h-3zM618 430h3v3h-3zM627 430h3v3h-3zM636 430h3v3h-3zM645 430h3v3h-3zM654 430h3v3h-3zM663 430h3v3h-3zM665 436h3v3h-3zM666 445h3v3h-3zM666 454h3v3h-3zM667 463h3v3h-3zM668 472h3v3h-3zM671 480h3v3h-3zM680 480h3v3h-3zM689 480h3v3h-3zM698 480h3v3h-3zM707 480h3v3h-3zM716 480h3v3h-3zM721 475h3v3h-3zM722 466h3v3h-3zM722 457h3v3h-3zM723 448h3v3h-3zM724 440h3v3h-3zM724 430h3v3h-3zM733 430h3v3h-3zM742 430h3v3h-3zM751 430h3v3h-3zM760 430h3v3h-3zM769 430h3v3h-3zM778 430h3v3h-3zM787 430h3v3h-3zM796 430h3v3h-3zM805 430h3v3h-3zM814 430h3v3h-3zM823 430h3v3h-3zM832 430h3v3h-3zM841 430h3v3h-3zM850 430h3v3h-3zM859 430h3v3h-3zM868 430h3v3h-3zM877 430h3v3h-3zM886 430h3v3h-3zM895 430h3v3h-3zM904 430h3v3h-3zM913 430h3v3h-3z" fill="#0000ff"/>
<path d="M216 552h3v3h-3zM217 543h3v3h-3zM218 534h3v3h-3zM218 526h3v3h-3zM219 516h3v3h-3zM220 508h3v3h-3zM224 502h3v3h-3zM233 502h3v3h-3zM242 502h3v3h-3zM251 502h3v3h-3zM260 502h3v3h-3zM269 502h3v3h-3zM278 502h3v3h-3zM287 502h3v3h-3zM296 502h3v3h-3zM305 502h3v3h-3zM314 502h3v3h-3zM323 502h3v3h-3zM332 502h3v3h-3zM341 502h3v3h-3zM350 502h3v3h-3zM358 502h3v3h-3zM367 502h3v3h-3zM376 502h3v3h-3zM385 502h3v3h-3zM394 502h3v3h-3zM403 502h3v3h-3zM412 502h3v3h-3zM413 510h3v3h-3zM414 519h3v3h-3zM415 528h3v3h-3zM415 537h3v3h-3zM416 546h3v3h-3zM421 552h3v3h-3zM430 552h3v3h-3zM439 552h3v3h-3zM448 552h3v3h-3zM457 552h3v3h-3zM466 552h3v3h-3zM469 545h3v3h-3zM470 536h3v3h-3zM470 528h3v3h-3zM471 518h3v3h-3zM472 510h3v3h-3zM474 502h3v3h-3zM483 502h3v3h-3zM492 502h3v3h-3zM501 502h3v3h-3zM510 502h3v3h-3zM519 502h3v3h-3zM528 502h3v3h-3zM537 502h3v3h-3zM546 502h3v3h-3zM555 502h3v3h-3zM564 502h3v3h-3zM573 502h3v3h-3zM582 502h3v3h-3zM591 502h3v3h-3zM600 502h3v3h-3zM609 502h3v3h-3zM618 502h3v3h-3zM627 502h3v3h-3zM636 502h3v3h-3zM645 502h3v3h-3zM654 502h3v3h-3zM663 502h3v3h-3zM665 508h3v3h-3zM666 517h3v3h-3zM666 526h3v3h-3zM667 535h3v3h-3zM668 544h3v3h-3zM671 552h3v3h-3zM680 552h3v3h-3zM689 552h3v3h-3zM698 552h3v3h-3zM707 552h3v3h-3zM716 552h3v3h-3zM721 547h3v3h-3zM722 538h3v3h-3zM722 529h3v3h-3zM723 520h3v3h-3zM724 512h3v3h-3zM724 502h3v3h-3zM733 502h3v3h-3zM742 502h3v3h-3zM751 502h3v3h-3zM760 502h3v3h-3zM769 502h3v3h-3zM778 502h3v3h-3zM787 502h3v3h-3zM796 502h3v3h-3zM805 502h3v3h-3zM814 502h3v3h-3zM823 502h3v3h-3zM832 502h3v3h-3zM841 502h3v3h-3zM850 502h3v3h-3zM859 502h3v3h-3zM868 502h3v3h-3zM877 502h3v3h-3zM886 502h3v3h-3zM895 502h3v3h-3zM904 502h3v3h-3zM913 502h3v3h-3z" fill="#a000ff"/>
<path d="M216 625h3v3h-3zM217 616h3v3h-3zM218 607h3v3h-3zM218 599h3v3h-3zM219 589h3v3h-3zM220 581h3v3h-3zM224 575h3v3h-3zM233 575h3v3h-3zM242 575h3v3h-3zM251 575h3v3h-3zM260 575h3v3h-3zM269 575h3v3h-3zM278 575h3v3h-3zM287 575h3v3h-3zM296 575h3v3h-3zM305 575h3v3h-3zM314 575h3v3h-3zM323 575h3v3h-3zM332 575h3v3h-3zM341 575h3v3h-3zM350 575h3v3h-3zM358 575h3v3h-3zM367 575h3v3h-3zM376 575h3v3h-3zM385 575h3v3h-3zM394 575h3v3h-3zM403 575h3v3h-3zM412 575h3v3h-3zM413 583h3v3h-3zM414 592h3v3h-3zM415 601h3v3h-3zM415 610h3v3h-3zM416 619h3v3h-3zM421 625h3v3h-3zM430 625h3v3h-3zM439 625h3v3h-3zM448 625h3v3h-3zM457 625h3v3h-3zM466 625h3v3h-3zM469 618h3v3h-3zM470 609h3v3h-3zM470 601h3v3h-3zM471 591h3v3h-3zM472 583h3v3h-3zM474 575h3v3h-3zM483 575h3v3h-3zM492 575h3v3h-3zM501 575h3v3h-3zM510 575h3v3h-3zM519 575h3v3h-3zM528 575h3v3h-3zM537 575h3v3h-3zM546 575h3v3h-3zM555 575h3v3h-3zM564 575h3v3h-3zM573 575h3v3h-3zM582 575h3v3h-3zM591 575h3v3h-3zM600 575h3v3h-3zM609 575h3v3h-3zM618 575h3v3h-3zM627 575h3v3h-3zM636 575h3v3h-3zM645 575h3v3h-3zM654 575h3v3h-3zM663 575h3v3h-3zM665 581h3v3h-3zM666 590h3v3h-3zM666 599h3v3h-3zM667 608h3v3h-3zM668 617h3v3h-3zM671 625h3v3h-3zM680 625h3v3h-3zM689 625h3v3h-3zM698 625h3v3h-3zM707 625h3v3h-3zM716 625h3v3h-3zM721 620h3v3h-3zM722 611h3v3h-3zM722 602h3v3h-3zM723 593h3v3h-3zM724 585h3v3h-3zM724 575h3v3h-3zM733 575h3v3h-3zM742 575h3v3h-3zM751 575h3v3h-3zM760 575h3v3h-3zM769 575h3v3h-3zM778 575h3v3h-3zM787 575h3v3h-3zM796 575h3v3h-3zM805 575h3v3h-3zM814 575h3v3h-3zM823 575h3v3h-3zM832 575h3v3h-3zM841 575h3v3h-3zM850 575h3v3h-3zM859 575h3v3h-3zM868 575h3v3h-3zM877 575h3v3h-3zM886 575h3v3h-3zM895 575h3v3h-3zM904 575h3v3h-3zM913 575h3v3h-3z" fill="#f0e800"/>
<path d="M215 647h3v3h-3zM216 657h3v3h-3zM217 666h3v3h-3zM218 675h3v3h-3zM220 684h3v3h-3zM221 693h3v3h-3zM226 697h3v3h-3zM235 697h3v3h-3zM244 697h3v3h-3zM253 697h3v3h-3zM262 697h3v3h-3zM271 697h3v3h-3zM280 697h3v3h-3zM285 693h3v3h-3zM286 684h3v3h-3zM287 675h3v3h-3zM289 666h3v3h-3zM290 657h3v3h-3zM291 649h3v3h-3zM298 647h3v3h-3zM307 647h3v3h-3zM316 647h3v3h-3zM325 647h3v3h-3zM334 647h3v3h-3zM340 649h3v3h-3zM342 659h3v3h-3zM343 667h3v3h-3zM344 676h3v3h-3zM346 685h3v3h-3zM347 694h3v3h-3zM353 697h3v3h-3zM362 697h3v3h-3zM371 697h3v3h-3zM380 697h3v3h-3zM389 697h3v3h-3zM398 697h3v3h-3zM407 697h3v3h-3zM411 692h3v3h-3zM412 683h3v3h-3zM414 674h3v3h-3zM415 665h3v3h-3zM416 656h3v3h-3zM418 647h3v3h-3zM426 647h3v3h-3zM435 647h3v3h-3zM444 647h3v3h-3zM453 647h3v3h-3zM462 647h3v3h-3zM467 651h3v3h-3zM468 660h3v3h-3zM470 669h3v3h-3zM471 678h3v3h-3zM472 687h3v3h-3zM473 695h3v3h-3zM481 697h3v3h-3zM490 697h3v3h-3zM499 697h3v3h-3zM508 697h3v3h-3zM517 697h3v3h-3zM526 697h3v3h-3zM535 697h3v3h-3zM537 690h3v3h-3zM539 681h3v3h-3zM540 673h3v3h-3zM541 664h3v3h-3zM542 655h3v3h-3zM544 647h3v3h-3zM553 647h3v3h-3zM562 647h3v3h-3zM571 647h3v3h-3zM580 647h3v3h-3zM589 647h3v3h-3zM593 652h3v3h-3zM594 661h3v3h-3zM596 670h3v3h-3zM597 679h3v3h-3zM598 688h3v3h-3zM599 697h3v3h-3zM608 697h3v3h-3zM617 697h3v3h-3zM626 697h3v3h-3zM635 697h3v3h-3zM644 697h3v3h-3zM653 697h3v3h-3zM662 697h3v3h-3zM664 689h3v3h-3zM665 680h3v3h-3zM666 671h3v3h-3zM667 662h3v3h-3zM668 653h3v3h-3zM672 647h3v3h-3zM681 647h3v3h-3zM690 647h3v3h-3zM699 647h3v3h-3zM708 647h3v3h-3zM717 647h3v3h-3zM720 654h3v3h-3zM721 663h3v3h-3zM722 672h3v3h-3zM723 681h3v3h-3zM724 689h3v3h-3zM726 697h3v3h-3zM736 697h3v3h-3zM745 697h3v3h-3zM754 697h3v3h-3zM763 697h3v3h-3zM772 697h3v3h-3zM781 697h3v3h-3zM789 697h3v3h-3zM790 688h3v3h-3zM791 679h3v3h-3zM792 670h3v3h-3zM794 661h3v3h-3zM795 652h3v3h-3zM799 647h3v3h-3zM808 647h3v3h-3zM817 647h3v3h-3zM826 647h3v3h-3zM835 647h3v3h-3zM844 647h3v3h-3zM846 655h3v3h-3zM847 664h3v3h-3zM848 673h3v3h-3zM849 682h3v3h-3zM850 691h3v3h-3zM854 697h3v3h-3zM863 697h3v3h-3zM872 697h3v3h-3zM881 697h3v3h-3zM890 697h3v3h-3zM899 697h3v3h-3zM908 697h3v3h-3z" fill="#e8f0ff"/>
<path d="M215 721h3v3h-3zM216 730h3v3h-3zM217 739h3v3h-3zM218 748h3v3h-3zM220 757h3v3h-3zM221 766h3v3h-3zM227 770h3v3h-3zM236 770h3v3h-3zM245 770h3v3h-3zM254 770h3v3h-3zM263 770h3v3h-3zM272 770h3v3h-3zM281 770h3v3h-3zM290 770h3v3h-3zM299 770h3v3h-3zM308 770h3v3h-3zM317 770h3v3h-3zM326 770h3v3h-3zM335 770h3v3h-3zM344 770h3v3h-3zM348 765h3v3h-3zM349 756h3v3h-3zM351 747h3v3h-3zM352 738h3v3h-3zM353 729h3v3h-3zM354 720h3v3h-3zM363 720h3v3h-3zM372 720h3v3h-3zM381 720h3v3h-3zM390 720h3v3h-3zM399 720h3v3h-3zM408 720h3v3h-3zM417 720h3v3h-3zM426 720h3v3h-3zM435 720h3v3h-3zM444 720h3v3h-3zM453 720h3v3h-3zM462 720h3v3h-3zM467 724h3v3h-3zM468 733h3v3h-3zM470 742h3v3h-3zM471 751h3v3h-3zM472 760h3v3h-3zM473 769h3v3h-3zM482 770h3v3h-3zM491 770h3v3h-3zM500 770h3v3h-3zM509 770h3v3h-3zM518 770h3v3h-3zM527 770h3v3h-3zM536 770h3v3h-3zM545 770h3v3h-3zM554 770h3v3h-3zM563 770h3v3h-3zM572 770h3v3h-3zM581 770h3v3h-3zM590 770h3v3h-3zM598 770h3v3h-3zM601 762h3v3h-3zM602 753h3v3h-3zM603 744h3v3h-3zM604 735h3v3h-3zM606 726h3v3h-3zM609 720h3v3h-3zM618 720h3v3h-3zM627 720h3v3h-3zM636 720h3v3h-3zM645 720h3v3h-3zM654 720h3v3h-3zM663 720h3v3h-3zM672 720h3v3h-3zM681 720h3v3h-3zM690 720h3v3h-3zM699 720h3v3h-3zM708 720h3v3h-3zM717 720h3v3h-3zM720 726h3v3h-3zM721 736h3v3h-3zM722 745h3v3h-3zM723 754h3v3h-3zM724 763h3v3h-3zM728 770h3v3h-3zM737 770h3v3h-3zM746 770h3v3h-3zM755 770h3v3h-3zM764 770h3v3h-3zM773 770h3v3h-3zM782 770h3v3h-3zM791 770h3v3h-3zM800 770h3v3h-3zM809 770h3v3h-3zM818 770h3v3h-3zM827 770h3v3h-3zM836 770h3v3h-3zM845 770h3v3h-3zM853 767h3v3h-3zM854 758h3v3h-3zM854 749h3v3h-3zM856 740h3v3h-3zM857 732h3v3h-3zM858 723h3v3h-3zM864 720h3v3h-3zM873 720h3v3h-3zM882 720h3v3h-3zM891 720h3v3h-3zM900 720h3v3h-3zM909 720h3v3h-3z" fill="#dc4c2e"/>
<rect x="216.5" y="112.5" width="15" height="11" fill="none" stroke="#a0a0a0" stroke-width="1"/>
<path d="M222 114 L227.5 118 L222 122 Z" fill="#8c8c8c"/>
<rect x="216.5" y="185.5" width="15" height="11" fill="none" stroke="#a0a0a0" stroke-width="1"/>
<path d="M222 187 L227.5 191 L222 195 Z" fill="#8c8c8c"/>
<rect x="216.5" y="257.5" width="15" height="11" fill="none" stroke="#a0a0a0" stroke-width="1"/>
<path d="M222 259 L227.5 263 L222 267 Z" fill="#8c8c8c"/>
<rect x="216.5" y="330.5" width="15" height="11" fill="none" stroke="#a0a0a0" stroke-width="1"/>
<path d="M222 332 L227.5 336 L222 340 Z" fill="#8c8c8c"/>
<rect x="216.5" y="402.5" width="15" height="11" fill="none" stroke="#a0a0a0" stroke-width="1"/>
<path d="M222 404 L227.5 408 L222 412 Z" fill="#8c8c8c"/>
<rect x="216.5" y="474.5" width="15" height="11" fill="none" stroke="#a0a0a0" stroke-width="1"/>
<path d="M222 476 L227.5 480 L222 484 Z" fill="#8c8c8c"/>
<rect x="216.5" y="547.5" width="15" height="11" fill="none" stroke="#a0a0a0" stroke-width="1"/>
<path d="M222 549 L227.5 553 L222 557 Z" fill="#8c8c8c"/>
<rect x="216.5" y="619.5" width="15" height="11" fill="none" stroke="#a0a0a0" stroke-width="1"/>
<path d="M222 621 L227.5 625 L222 629 Z" fill="#8c8c8c"/>
<rect x="216.5" y="692.5" width="15" height="11" fill="none" stroke="#a0a0a0" stroke-width="1"/>
<path d="M222 694 L227.5 698 L222 702 Z" fill="#8c8c8c"/>
<rect x="216.5" y="764.5" width="15" height="11" fill="none" stroke="#a0a0a0" stroke-width="1"/>
<path d="M222 766 L227.5 770 L222 774 Z" fill="#8c8c8c"/>
<path d="M216 782.5 H917 M216.5 782 V795 M223.5 782 V787 M230.5 782 V787 M237.5 782 V787 M244.5 782 V787 M251.5 782 V791 M258.5 782 V787 M265.5 782 V787 M272.5 782 V787 M279.5 782 V787 M286.5 782 V795 M293.5 782 V787 M300.5 782 V787 M307.5 782 V787 M314.5 782 V787 M321.5 782 V791 M328.5 782 V787 M335.5 782 V787 M342.5 782 V787 M349.5 782 V787 M356.5 782 V795 M363.5 782 V787 M370.5 782 V787 M377.5 782 V787 M384.5 782 V787 M391.5 782 V791 M398.5 782 V787 M405.5 782 V787 M412.5 782 V787 M419.5 782 V787 M426.5 782 V795 M433.5 782 V787 M440.5 782 V787 M447.5 782 V787 M454.5 782 V787 M461.5 782 V791 M468.5 782 V787 M475.5 782 V787 M482.5 782 V787 M489.5 782 V787 M496.5 782 V795 M503.5 782 V787 M510.5 782 V787 M517.5 782 V787 M524.5 782 V787 M531.5 782 V791 M538.5 782 V787 M545.5 782 V787 M552.5 782 V787 M559.5 782 V787 M566.5 782 V795 M573.5 782 V787 M580.5 782 V787 M587.5 782 V787 M594.5 782 V787 M601.5 782 V791 M608.5 782 V787 M615.5 782 V787 M622.5 782 V787 M629.5 782 V787 M636.5 782 V795 M643.5 782 V787 M650.5 782 V787 M657.5 782 V787 M664.5 782 V787 M671.5 782 V791 M678.5 782 V787 M685.5 782 V787 M692.5 782 V787 M699.5 782 V787 M706.5 782 V795 M713.5 782 V787 M720.5 782 V787 M727.5 782 V787 M734.5 782 V787 M741.5 782 V791 M748.5 782 V787 M755.5 782 V787 M762.5 782 V787 M769.5 782 V787 M776.5 782 V795 M783.5 782 V787 M790.5 782 V787 M797.5 782 V787 M804.5 782 V787 M811.5 782 V791 M818.5 782 V787 M825.5 782 V787 M832.5 782 V787 M839.5 782 V787 M846.5 782 V795 M853.5 782 V787 M860.5 782 V787 M867.5 782 V787 M874.5 782 V787 M881.5 782 V791 M888.5 782 V787 M895.5 782 V787 M902.5 782 V787 M909.5 782 V787 M916.5 782 V795" stroke="#ffffff" stroke-width="1" fill="none"/>
<text x="216.3" y="811.8" text-anchor="middle" font-family="Liberation Serif" font-size="14" fill="#e8e8e8">0.0</text>
<text x="286.3" y="811.8" text-anchor="middle" font-family="Liberation Serif" font-size="14" fill="#e8e8e8">10.0</text>
<text x="356.3" y="811.8" text-anchor="middle" font-family="Liberation Serif" font-size="14" fill="#e8e8e8">20.0</text>
<text x="426.3" y="811.8" text-anchor="middle" font-family="Liberation Serif" font-size="14" fill="#e8e8e8">30.0</text>
<text x="496.3" y="811.8" text-anchor="middle" font-family="Liberation Serif" font-size="14" fill="#e8e8e8">40.0</text>
<text x="566.3" y="811.8" text-anchor="middle" font-family="Liberation Serif" font-size="14" fill="#e8e8e8">50.0</text>
<text x="636.3" y="811.8" text-anchor="middle" font-family="Liberation Serif" font-size="14" fill="#e8e8e8">60.0</text>
<text x="706.3" y="811.8" text-anchor="middle" font-family="Liberation Serif" font-size="14" fill="#e8e8e8">70.0</text>
<text x="776.3" y="811.8" text-anchor="middle" font-family="Liberation Serif" font-size="14" fill="#e8e8e8">80.0</text>
<text x="846.3" y="811.8" text-anchor="middle" font-family="Liberation Serif" font-size="14" fill="#e8e8e8">90.0</text>
<text x="916.3" y="811.8" text-anchor="middle" font-family="Liberation Serif" font-size="14" fill="#e8e8e8">100</text>
<text x="566" y="827.6" text-anchor="middle" font-family="Liberation Serif" font-size="14" fill="#e8e8e8">time (ns)</text>
<text x="783" y="20" font-family="Liberation Serif" font-size="14" fill="#e8e8e8" textLength="113.3" lengthAdjust="spacingAndGlyphs">Tue Nov 7 10:11:59</text>
<text x="784.5" y="37" font-family="Liberation Serif" font-size="14" fill="#e8e8e8">2023</text>
<text x="939" y="20" font-family="Liberation Serif" font-size="14" fill="#e8e8e8">1</text>
<rect x="216.5" y="31.5" width="12" height="23" fill="url(#btn)" stroke="#606060" stroke-width="1"/>
<path d="M218.5 42 L224 38.8 L224 45.2 Z" fill="#ee0000"/>
<rect x="902.5" y="31.5" width="12" height="23" fill="url(#btn)" stroke="#606060" stroke-width="1"/>
<path d="M911 42 L905 38.8 L905 45.2 Z" fill="#ee0000"/>
<rect x="228" y="28" width="675" height="30" rx="5.5" fill="url(#pill)"/>
<rect x="240" y="31.5" width="651" height="22.5" rx="3" fill="url(#dark)"/>
<rect x="233" y="35.5" width="1.2" height="14.5" fill="#000"/><rect x="235.2" y="35.5" width="1.2" height="14.5" fill="#000"/>
<rect x="895" y="35.5" width="1.2" height="14.5" fill="#000"/><rect x="897.2" y="35.5" width="1.2" height="14.5" fill="#000"/>
<polyline points="240.5,33.5 247.0,52.5 364.0,52.5 370.5,33.5 474.5,33.5 481.0,52.5 598.0,52.5 604.5,33.5 708.5,33.5 715.0,52.5 832.0,52.5 838.5,33.5 890.5,33.5" fill="none" stroke="#d0441e" stroke-width="1"/>
</svg></body></html>
